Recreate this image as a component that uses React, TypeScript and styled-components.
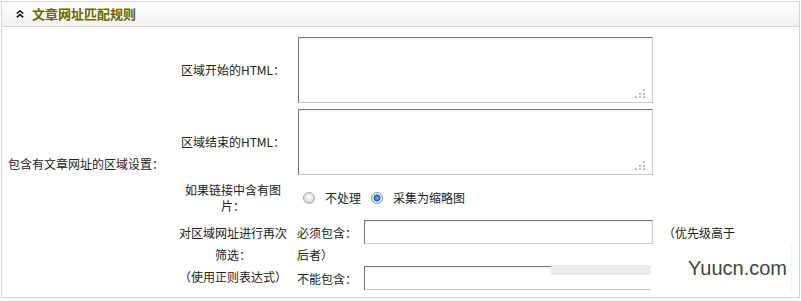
import React from 'react';
import styled, { createGlobalStyle } from 'styled-components';

const GlobalStyle = createGlobalStyle`
  html, body {
    margin: 0;
    padding: 0;
    background: #ffffff;
  }
  body {
    font-family: "Noto Sans CJK SC", "Liberation Sans", sans-serif;
    font-size: 12px;
    color: #222222;
  }
`;

const Page = styled.div`
  position: relative;
  width: 801px;
  height: 301px;
  padding: 1px 0 0 1px;
  box-sizing: border-box;
  overflow: hidden;
`;

const Panel = styled.section`
  width: 799px;
  box-sizing: border-box;
  border: 1px solid #d6d6d6;
`;

const Header = styled.div`
  height: 24px;
  display: flex;
  align-items: center;
  gap: 8px;
  padding-left: 14px;
  background: linear-gradient(#ffffff, #f1f1f1);
  border-bottom: 1px solid #d6d6d6;
`;

const Title = styled.h3`
  margin: 0;
  font-size: 13px;
  font-weight: bold;
  line-height: 24px;
  color: #666600;
`;

const Body = styled.div`
  display: grid;
  grid-template-columns: 167px 114px 1fr;
  grid-template-rows: 66px 66px 33px 70px;
  column-gap: 7px;
  row-gap: 6px;
  padding: 10px 0 7px 0;
`;

const GroupLabel = styled.div`
  grid-row: 1 / span 4;
  align-self: center;
  padding-left: 6px;
  white-space: nowrap;
`;

type FieldLabelProps = {
  $lineHeight: number;
};
const FieldLabel = styled.div<FieldLabelProps>`
  align-self: center;
  text-align: center;
  line-height: ${(props) => props.$lineHeight}px;
`;

const Cell = styled.div`
  display: flex;
  align-items: center;
`;

const AreaWrap = styled.div`
  position: relative;
  margin-left: 1px;
  width: 355px;
  height: 66px;
`;

const fieldBorder = `
  box-sizing: border-box;
  border-top: 1px solid #767676;
  border-left: 1px solid #767676;
  border-right: 1px solid #cacaca;
  border-bottom: 1px solid #cacaca;
  box-shadow: inset 0 1px 2px rgba(0, 0, 0, 0.07);
  background: #ffffff;
  outline: none;
  font: inherit;
`;

const Area = styled.textarea`
  ${fieldBorder}
  display: block;
  width: 100%;
  height: 100%;
  resize: none;
  padding: 2px;
`;

const Grip = styled.svg`
  position: absolute;
  right: 8px;
  bottom: 5px;
  pointer-events: none;
`;

const RadioGroup = styled.div`
  display: flex;
  align-items: center;
  gap: 10px;
  padding-left: 6px;
`;

const Option = styled.label`
  display: flex;
  align-items: center;
  gap: 10px;
`;

const Radio = styled.input.attrs({ type: 'radio' })`
  appearance: none;
  margin: 0;
  width: 12px;
  height: 12px;
  border-radius: 50%;
  border: 1px solid #a8a8a8;
  box-sizing: border-box;
  background: radial-gradient(circle at 50% 40%, #ffffff 0, #f2f2f2 2px, #d2d2d2 6px);

  &:checked {
    border-color: #8a9aaa;
    background: radial-gradient(circle at 50% 50%, #6cc0f5 0, #1c74c4 2.6px, #0d4f93 3.2px, #eef0f2 3.8px, #d0d0d0 6px);
  }
`;

const FilterBox = styled.div`
  display: flex;
  flex-direction: column;
`;

const FilterLine = styled.div`
  display: flex;
  align-items: center;
  height: 24px;
`;

const WrapLine = styled.div`
  height: 22px;
  line-height: 22px;
`;

const Key = styled.span`
  width: 67px;
  flex: none;
`;

const TextInput = styled.input.attrs({ type: 'text' })`
  ${fieldBorder}
  width: 289px;
  height: 24px;
  padding: 0 3px;
`;

const Note = styled.span`
  margin-left: 10px;
`;

const Watermark = styled.div`
  position: absolute;
  left: 651px;
  top: 245px;
  width: 141px;
  height: 46px;
  background: #ffffff;
  border-right: 1px solid #f3f3f3;
  display: flex;
  align-items: center;
  justify-content: flex-end;
  padding-right: 4px;
  box-sizing: border-box;
  font-family: "Liberation Sans", Arial, sans-serif;
  font-size: 20px;
  color: #444444;
`;

const Smudge = styled.div`
  position: absolute;
  left: 551px;
  top: 265px;
  width: 100px;
  height: 10px;
  background: #ebebeb;
`;

const CollapseIcon = () => (
  <svg width="8" height="8" viewBox="0 0 8 8">
    <polyline points="0.8,3.6 4,0.8 7.2,3.6" fill="none" stroke="#111" strokeWidth="1.5" />
    <polyline points="0.8,7.4 4,4.6 7.2,7.4" fill="none" stroke="#111" strokeWidth="1.5" />
  </svg>
);

const gripDots = [
  [8, 0],
  [4, 4],
  [8, 4],
  [0, 7],
  [4, 7],
  [8, 7],
];

const ResizeGrip = () => (
  <Grip width="10" height="9" viewBox="0 0 10 9">
    {gripDots.map(([x, y], i) => (
      <rect key={i} x={x} y={y} width="2" height="2" fill="#b8b8b8" />
    ))}
  </Grip>
);

const HtmlArea = () => (
  <AreaWrap>
    <Area />
    <ResizeGrip />
  </AreaWrap>
);

export default function App() {
  return (
    <Page>
      <GlobalStyle />
      <Panel>
        <Header>
          <CollapseIcon />
          <Title>文章网址匹配规则</Title>
        </Header>
        <Body>
          <GroupLabel>包含有文章网址的区域设置：</GroupLabel>

          <FieldLabel $lineHeight={16}>区域开始的HTML：</FieldLabel>
          <Cell>
            <HtmlArea />
          </Cell>

          <FieldLabel $lineHeight={16}>区域结束的HTML：</FieldLabel>
          <Cell>
            <HtmlArea />
          </Cell>

          <FieldLabel $lineHeight={16}>如果链接中含有图片：</FieldLabel>
          <Cell>
            <RadioGroup>
              <Option>
                <Radio name="thumb" />
                不处理
              </Option>
              <Option>
                <Radio name="thumb" defaultChecked />
                采集为缩略图
              </Option>
            </RadioGroup>
          </Cell>

          <FieldLabel $lineHeight={22}>
            对区域网址进行再次筛选：
            <br />
            （使用正则表达式）
          </FieldLabel>
          <FilterBox>
            <FilterLine>
              <Key>必须包含：</Key>
              <TextInput />
              <Note>（优先级高于</Note>
            </FilterLine>
            <WrapLine>后者）</WrapLine>
            <FilterLine>
              <Key>不能包含：</Key>
              <TextInput />
            </FilterLine>
          </FilterBox>
        </Body>
      </Panel>
      <Smudge />
      <Watermark>Yuucn.com</Watermark>
    </Page>
  );
}
